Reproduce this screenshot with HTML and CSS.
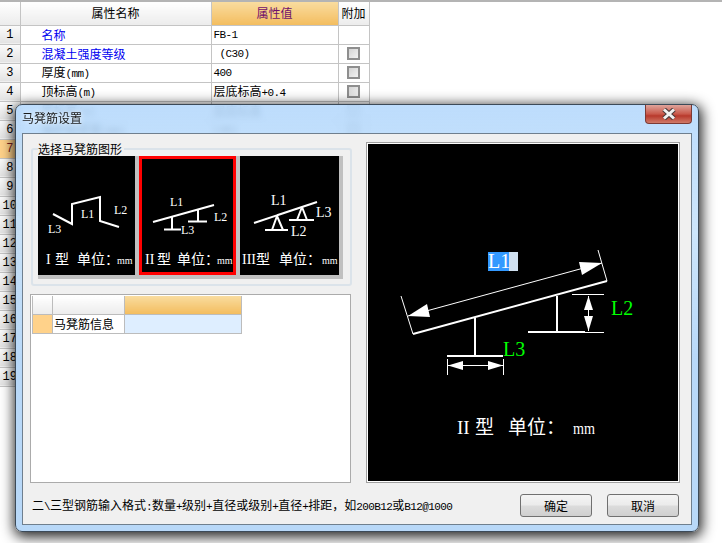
FILE: index.html
```html
<!DOCTYPE html>
<html lang="zh-CN">
<head>
  <meta charset="UTF-8">
  <title>马凳筋设置</title>
  <link rel="stylesheet" href="styles.css">
</head>
<body>

  <table class="props">
    <tr class="head"><th class="num"></th><th class="name">属性名称</th><th class="val">属性值</th><th class="extra">附加</th></tr>
    <tr><td class="num">1</td><td class="name blue">名称</td><td class="val mono">FB-1</td><td></td></tr>
    <tr><td class="num">2</td><td class="name blue">混凝土强度等级</td><td class="val mono">&nbsp;(C30)</td><td><span class="check"></span></td></tr>
    <tr><td class="num">3</td><td class="name">厚度<span class="mono">(mm)</span></td><td class="val mono">400</td><td><span class="check"></span></td></tr>
    <tr><td class="num">4</td><td class="name">顶标高<span class="mono">(m)</span></td><td class="val">层底标高<span class="mono">+0.4</span></td><td><span class="check"></span></td></tr>
    <tr><td class="num">5</td><td class="name">底标高<span class="mono">(m)</span></td><td class="val">层底标高</td><td><span class="check"></span></td></tr>
    <tr><td class="num">6</td><td class="name">保护层厚度<span class="mono">(mm)</span></td><td class="val mono">(40)</td><td><span class="check"></span></td></tr>
    <tr><td class="num sel">7</td><td></td><td></td><td></td></tr>
    <tr><td class="num">8</td><td></td><td></td><td></td></tr>
    <tr><td class="num">9</td><td></td><td></td><td></td></tr>
    <tr><td class="num">10</td><td></td><td></td><td></td></tr>
    <tr><td class="num">11</td><td></td><td></td><td></td></tr>
    <tr><td class="num">12</td><td></td><td></td><td></td></tr>
    <tr><td class="num">13</td><td></td><td></td><td></td></tr>
    <tr><td class="num">14</td><td></td><td></td><td></td></tr>
    <tr><td class="num">15</td><td></td><td></td><td></td></tr>
    <tr><td class="num">16</td><td></td><td></td><td></td></tr>
    <tr><td class="num">17</td><td></td><td></td><td></td></tr>
    <tr><td class="num">18</td><td></td><td></td><td></td></tr>
    <tr><td class="num">19</td><td></td><td></td><td></td></tr>
  </table>

  <div class="dialog">
    <div class="titlebar">
      <span class="title">马凳筋设置</span>
      <span class="close">
        <svg width="20" height="12" viewBox="0 0 20 12">
          <path class="x-out" d="M5 1.5 L15 10.5 M15 1.5 L5 10.5"/>
          <path class="x-in" d="M5 1.5 L15 10.5 M15 1.5 L5 10.5"/>
        </svg>
      </span>
    </div>

    <div class="panel">
      <div class="main">
        <div class="left">
          <fieldset class="group">
            <legend>选择马凳筋图形</legend>
            <div class="thumbs">
              <div class="thumb">
                <svg width="97" height="119" viewBox="0 0 97 119">
                  <polyline class="wire" points="15,58 34,68 34,48 62,41 62,65 81,71"/>
                  <text class="lbl" x="43" y="62">L1</text>
                  <text class="lbl" x="76" y="58">L2</text>
                  <text class="lbl" x="10" y="77">L3</text>
                  <text class="cap" y="108"><tspan x="8">I</tspan><tspan x="17">型</tspan><tspan x="39">单位：</tspan></text>
                  <text class="unit" x="79" y="108">mm</text>
                </svg>
              </div>
              <div class="thumb picked">
                <svg width="91" height="113" viewBox="3 3 91 113">
                  <line class="wire" x1="14" y1="66" x2="75" y2="49"/>
                  <path class="wire" d="M33 61 V73 M25 73.500 H42 M59 54 V65 M49 65.500 H68"/>
                  <text class="lbl" x="31" y="50">L1</text>
                  <text class="lbl" x="75" y="65">L2</text>
                  <text class="lbl" x="42" y="78">L3</text>
                  <text class="cap" y="108"><tspan x="6">II</tspan><tspan x="18">型</tspan><tspan x="38">单位：</tspan></text>
                  <text class="unit" x="78" y="108">mm</text>
                </svg>
              </div>
              <div class="thumb wide">
                <svg width="99" height="119" viewBox="0 0 99 119">
                  <line class="wire" x1="14" y1="67" x2="77" y2="46"/>
                  <path class="wire" d="M37 60 L32 74 M37 60 L43 74 M25 74 H48 M62 51 L57 64 M62 51 L67 64 M49 64 H74"/>
                  <text class="lbl big" x="31" y="49">L1</text>
                  <text class="lbl big" x="76" y="61">L3</text>
                  <text class="lbl big" x="51" y="80">L2</text>
                  <text class="cap" y="108"><tspan x="2">III</tspan><tspan x="16">型</tspan><tspan x="39">单位：</tspan></text>
                  <text class="unit" x="82" y="108">mm</text>
                </svg>
              </div>
            </div>
          </fieldset>

          <div class="gridbox">
            <table class="info">
              <tr class="head"><th class="c1"></th><th class="c2"></th><th class="c3"></th></tr>
              <tr><td class="c1 mark"></td><td class="c2">马凳筋信息</td><td class="c3 edit"></td></tr>
            </table>
          </div>
        </div>

        <div class="preview">
          <svg width="310" height="337" viewBox="0 0 310 337">
            <rect class="sel-bg" x="120" y="108" width="30" height="19"/>
            <rect class="sel-fg" x="120" y="108" width="21" height="19"/>
            <path class="wire" d="M45 190 L239 137 M107 173 V212 M79 212 H135 M189 152 V188 M160 188 H217"/>
            <path class="thin" d="M33 152 L45 190 M230 106 L239 137 M40 172 L234 119 M204 150.500 H236 M217 188.500 H236 M220.500 152 V187 M79.500 215 V231 M135.500 215 V231 M80 221.500 H135"/>
            <polygon class="fill" points="40,172 59,160 62,173"/>
            <polygon class="fill" points="234,119 211,118 214,131"/>
            <polygon class="fill" points="220.500,152 216,166 225,166"/>
            <polygon class="fill" points="220.500,187 216,172 225,172"/>
            <polygon class="fill" points="80,221.500 95,217 95,226"/>
            <polygon class="fill" points="135,221.500 120,217 120,226"/>
            <text class="dim" x="120" y="124" fill="#fff">L1</text>
            <text class="dim" x="243" y="171" fill="#0f0">L2</text>
            <text class="dim" x="135" y="212" fill="#0f0">L3</text>
            <text class="cap large" y="290"><tspan x="89">II</tspan><tspan x="107">型</tspan><tspan x="140">单位：</tspan></text>
            <text class="unit large" x="205" y="290" textLength="22" lengthAdjust="spacingAndGlyphs">mm</text>
          </svg>
        </div>
      </div>

      <div class="footer">
        <span class="hint">二<span class="mono">\</span>三型钢筋输入格式<span class="mono">:</span>数量<span class="mono">+</span>级别<span class="mono">+</span>直径或级别<span class="mono">+</span>直径<span class="mono">+</span>排距，如<span class="mono">200B12</span>或<span class="mono">B12@1000</span></span>
        <button type="button">确定</button>
        <button type="button">取消</button>
      </div>
    </div>
  </div>

</body>
</html>
```

FILE: styles.css
```css
body {
  margin: 0;
  width: 722px;
  height: 543px;
  overflow: hidden;
  background: #fff;
  border-top: 2px solid #b4b4b4;
  box-sizing: border-box;
  position: relative;
  font-family: "Noto Sans CJK SC", "Liberation Sans", sans-serif;
  font-size: 12px;
  color: #000;
}

.mono {
  font-family: "Liberation Mono", monospace;
  font-size: 11px;
  letter-spacing: -0.6px;
}

/* property table behind the dialog */
.props {
  border-collapse: collapse;
  table-layout: fixed;
  width: 369px;
}

.props th,
.props td {
  box-sizing: border-box;
  padding: 0;
  height: 19px;
  line-height: 16px;
  border: 1px solid #c4c4c4;
  font-weight: normal;
  overflow: hidden;
  white-space: nowrap;
}

.props tr:first-child th {
  border-top: none;
}

.props .head th {
  height: 23px;
  background: linear-gradient(#fff, #ececec);
}

.props .head .val {
  color: #70106c;
  text-align: center;
  padding: 0;
  background: linear-gradient(#f9dc9f, #f3bd5f);
}

.props th.num,
.props td.num {
  width: 20px;
  border-left: none;
}

.props td.num {
  text-align: center;
  font-family: "Liberation Mono", monospace;
  background: linear-gradient(#fbfbfb, #e2e2e2);
}

.props td.num.sel {
  background: #ffd28a;
  color: #7a1f1f;
}

.props .name {
  width: 191px;
}

.props td.name {
  padding-left: 21px;
}

.props .head .name {
  text-align: center;
}

.props .val {
  width: 127px;
}

.props td.val {
  padding-left: 2px;
}

.props .extra {
  width: 31px;
  text-align: center;
}

.props td:last-child {
  text-align: center;
}

.blue {
  color: #0000f0;
}

.check {
  display: block;
  width: 9px;
  height: 9px;
  margin: 0 auto;
  border: 2px solid #8e8e8e;
  background: linear-gradient(135deg, #d4d4d4, #f2f2f2);
}

/* dialog */
.dialog {
  position: absolute;
  left: 15px;
  top: 102px;
  width: 684px;
  height: 428px;
  box-sizing: border-box;
  display: flex;
  flex-direction: column;
  border: 1px solid #3c4a58;
  border-radius: 7px;
  background: linear-gradient(rgba(182, 217, 252, 0.9), rgba(186, 220, 250, 0.72) 30%, #b8d8f8 60%);
  backdrop-filter: blur(3px);
  box-shadow: 1px 3px 13px 2px rgba(0, 0, 0, 0.85);
}

.titlebar {
  height: 28px;
  flex: none;
  display: flex;
  align-items: flex-start;
  justify-content: space-between;
}

.title {
  margin: 5px 0 0 6px;
  line-height: 16px;
  color: #1a1a1a;
  text-shadow: 0 0 5px #fff;
}

.close {
  width: 47px;
  height: 19px;
  margin-right: 6px;
  box-sizing: border-box;
  display: flex;
  align-items: center;
  justify-content: center;
  border: 1px solid #7c3a34;
  border-top: none;
  border-radius: 0 0 4px 4px;
  background: linear-gradient(#dfa49b, #c8584a 50%, #b8392c 60%, #d07a68);
}

.x-out {
  fill: none;
  stroke: #4a3a3a;
  stroke-width: 5;
}

.x-in {
  fill: none;
  stroke: #f2f2f2;
  stroke-width: 3;
}

.panel {
  flex: 1;
  margin: 0 6px 6px;
  border: 1px solid #6f7f8e;
  background: #f0f0f0;
  display: flex;
  flex-direction: column;
}

.main {
  display: flex;
  gap: 15px;
  height: 341px;
  padding: 8px 11px 0 7px;
}

.left {
  width: 321px;
  flex: none;
  display: flex;
  flex-direction: column;
}

.group {
  margin: 0 0 0 1px;
  padding: 0 7px 5px 5px;
  width: 319px;
  box-sizing: border-box;
  border: 2px solid #dbe3ea;
  border-radius: 3px;
}

.group legend {
  padding: 0 2px 0 0;
  margin-left: 0;
  line-height: 14px;
}

.thumbs {
  display: flex;
  gap: 4px;
  width: 301px;
  padding: 0 4px 4px 0;
  background: #c0c0c0;
}

.thumb {
  width: 97px;
  height: 119px;
  flex: none;
  background: #000;
}

.thumb.wide {
  width: 99px;
}

.thumb.picked {
  border: 3px solid #f00;
  box-sizing: border-box;
}

.thumb svg,
.preview svg {
  display: block;
}

.wire {
  fill: none;
  stroke: #fff;
  stroke-width: 2;
}

.thin {
  fill: none;
  stroke: #fff;
  stroke-width: 1;
}

.fill {
  fill: #fff;
}

.lbl {
  font: 12px "Liberation Serif", serif;
  fill: #fff;
}

.lbl.big {
  font-size: 14px;
}

.cap {
  font: 14px "Liberation Serif", "Noto Sans CJK SC", serif;
  fill: #fff;
}

.cap.large {
  font-size: 19px;
}

.unit {
  font: 10px "Liberation Serif", serif;
  fill: #fff;
}

.unit.large {
  font-size: 17px;
}

.dim {
  font: 20px "Liberation Serif", serif;
}

.sel-bg {
  fill: #d0e0f0;
}

.sel-fg {
  fill: #3399ff;
}

.gridbox {
  margin-top: 8px;
  flex: 1;
  background: #fff;
  border: 1px solid #ababab;
  padding: 1px 0 0 1px;
}

.info {
  border-collapse: collapse;
  table-layout: fixed;
  width: 209px;
}

.info th,
.info td {
  box-sizing: border-box;
  padding: 0;
  border: 1px solid #bcbcbc;
  font-weight: normal;
}

.info .head th {
  height: 18px;
  border-top: none;
  background: linear-gradient(#fff, #ececec);
}

.info .head .c3 {
  background: linear-gradient(#f9dc9f, #f3bd5f);
}

.info td {
  height: 19px;
  line-height: 16px;
  background: #fff;
}

.info .c1 {
  width: 20px;
}

.info .c2 {
  width: 72px;
}

.info .c3 {
  width: 117px;
}

.info td.mark {
  background: #ffd28a;
}

.info td.edit {
  background: #deeeff;
}

.info td.c2 {
  padding-left: 1px;
  font-size: 12px;
}

.preview {
  flex: 1;
  box-sizing: border-box;
  padding: 1px;
  background: #fff;
  border: 1px solid #a0a0a0;
}

.preview svg {
  background: #000;
}

.footer {
  flex: 1;
  display: flex;
  align-items: flex-start;
  gap: 15px;
  padding: 11px 12px 0 9px;
}

.hint {
  flex: 1;
  line-height: 22px;
  white-space: nowrap;
}

button {
  width: 72px;
  height: 23px;
  padding: 0;
  font: inherit;
  color: #000;
  border: 1px solid #707070;
  border-radius: 3px;
  background: linear-gradient(#f4f4f4, #ebebeb 48%, #dcdcdc 52%, #cfcfcf);
}
```
